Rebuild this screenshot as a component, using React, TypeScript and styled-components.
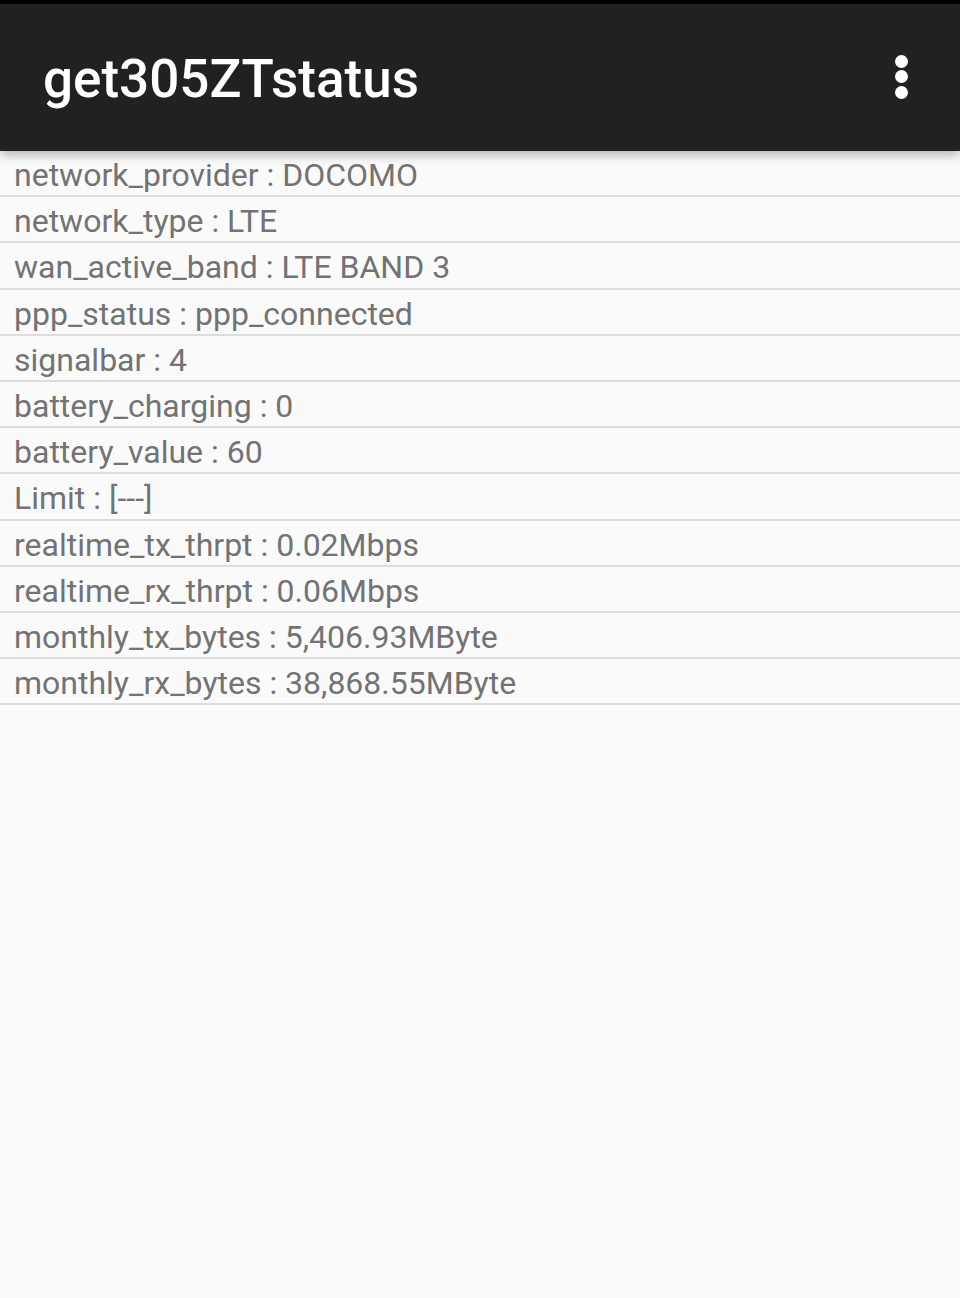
import React from "react";
import styled, { createGlobalStyle } from "styled-components";

const GlobalStyle = createGlobalStyle`
  html, body {
    margin: 0;
    padding: 0;
    background: #fafafa;
  }
  body {
    font-family: Roboto, "Liberation Sans", sans-serif;
  }
`;

const Screen = styled.div`
  width: 960px;
  min-height: 1298px;
  background: #fafafa;
  display: flex;
  flex-direction: column;
`;

const StatusStrip = styled.div`
  height: 4px;
  background: #000;
`;

const Toolbar = styled.header`
  height: 147px;
  background: #212121;
  display: flex;
  align-items: center;
  justify-content: space-between;
  padding: 0 52px 0 43px;
  box-shadow: 0 4px 10px rgba(0, 0, 0, 0.28);
  position: relative;
  z-index: 1;
`;

const Title = styled.h1`
  margin: 2px 0 0 0;
  color: #fff;
  font-size: 53px;
  font-weight: 500;
  letter-spacing: 0;
`;

const OverflowButton = styled.button`
  border: none;
  background: none;
  padding: 0;
  display: flex;
  flex-direction: column;
  gap: 2.5px;
  margin-bottom: 2px;
`;

const Dot = styled.span`
  width: 13px;
  height: 13px;
  border-radius: 50%;
  background: #fff;
`;

const List = styled.ul`
  list-style: none;
  margin: 0;
  padding: 0;
`;

const Row = styled.li`
  height: 44.2px;
  box-sizing: content-box;
  line-height: 48px;
  overflow: hidden;
  padding-left: 14px;
  border-bottom: 2px solid #dcdcdc;
  color: #737373;
  font-size: 32px;
  white-space: nowrap;
`;

const items: [string, string][] = [
  ["network_provider", "DOCOMO"],
  ["network_type", "LTE"],
  ["wan_active_band", "LTE BAND 3"],
  ["ppp_status", "ppp_connected"],
  ["signalbar", "4"],
  ["battery_charging", "0"],
  ["battery_value", "60"],
  ["Limit", "[---]"],
  ["realtime_tx_thrpt", "0.02Mbps"],
  ["realtime_rx_thrpt", "0.06Mbps"],
  ["monthly_tx_bytes", "5,406.93MByte"],
  ["monthly_rx_bytes", "38,868.55MByte"],
];

export default function App() {
  return (
    <Screen>
      <GlobalStyle />
      <StatusStrip />
      <Toolbar>
        <Title>get305ZTstatus</Title>
        <OverflowButton aria-label="More options">
          <Dot />
          <Dot />
          <Dot />
        </OverflowButton>
      </Toolbar>
      <List>
        {items.map(([key, value]) => (
          <Row key={key}>
            {key} : {value}
          </Row>
        ))}
      </List>
    </Screen>
  );
}
